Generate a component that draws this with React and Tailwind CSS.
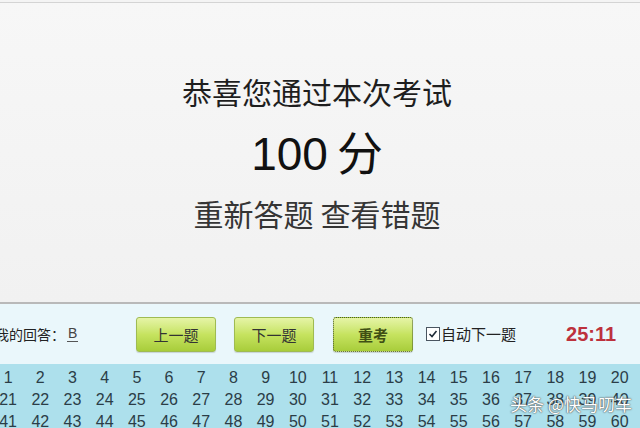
const arial = "font-['Liberation_Sans',Arial,'Noto_Sans_CJK_SC',sans-serif]"

function GreenButton({ children, focused }) {
  return (
    <button
      className={`w-[80px] h-[35px] rounded-[3px] bg-gradient-to-b from-[#e6f4a6] via-[#c6e35f] to-[#a8cd3a] text-[15px] leading-none shadow-[0_1px_1px_rgba(0,0,0,0.15)] ${
        focused
          ? 'border border-dotted border-[#4b5a2a] text-[#3f4f14] font-bold'
          : 'border border-[#9fbb52] text-[#333]'
      }`}
    >
      {children}
    </button>
  )
}

const rows = [
  Array.from({ length: 20 }, (_, i) => i + 1),
  Array.from({ length: 20 }, (_, i) => i + 21),
  Array.from({ length: 20 }, (_, i) => i + 41),
]

export default function App() {
  return (
    <div className="relative w-[640px] h-[428px] overflow-hidden bg-[#f4f4f4] font-['Noto_Sans_CJK_SC','Noto_Sans',sans-serif]">
      {/* result panel */}
      <div className="h-[300px] mt-[2px] border-t border-[#d4d4d4] bg-gradient-to-b from-[#f7f7f7] to-[#f1f1f1] flex flex-col items-center">
        <h1 className="mt-[73px] ml-[-6px] text-[30px] leading-none text-[#1e1e1e] font-normal">
          恭喜您通过本次考试
        </h1>
        <div className="mt-[21px] ml-[-6px] flex items-baseline text-[46px] leading-none text-[#111]">
          <span className={arial}>100</span>
          <span className="ml-[9px]">分</span>
        </div>
        <div className="mt-[21px] ml-[-6px] flex gap-[7px] text-[30px] leading-none text-[#353535]">
          <span>重新答题</span>
          <span>查看错题</span>
        </div>
      </div>

      {/* toolbar */}
      <div className="h-[62px] border-t-2 border-[#b9b9b9] bg-[#eaf7fb] flex items-center">
        <div className="ml-[-5px] w-[141px] flex items-center text-[14px] text-[#222]">
          <span>我的回答：</span>
          <span className={`ml-[2px] px-[1px] border-b border-[#555] leading-[15px] text-[#444] ${arial}`}>B</span>
        </div>
        <div className="flex items-center gap-[18px]">
          <GreenButton>上一题</GreenButton>
          <GreenButton>下一题</GreenButton>
        </div>
        <div className="ml-[19px]">
          <GreenButton focused>重考</GreenButton>
        </div>
        <label className="ml-[13px] flex items-center text-[15px] text-[#222]">
          <span className="w-[14px] h-[14px] border border-[#4a5560] bg-white flex items-center justify-center">
            <svg width="10" height="10" viewBox="0 0 10 10">
              <path d="M1.5 5 L4 7.5 L8.5 2" fill="none" stroke="#1d2a36" strokeWidth="1.6" />
            </svg>
          </span>
          <span className="ml-[1px]">自动下一题</span>
        </label>
        <span className={`ml-[50px] text-[20px] font-bold text-[#bd313c] ${arial}`}>25:11</span>
      </div>

      {/* question number grid */}
      <div className="bg-[#ade0ec] pt-[3px] h-[80px]">
        {rows.map((row, r) => (
          <div key={r} className="ml-[-8px] grid grid-cols-[repeat(20,32.2px)] h-[22px] items-center">
            {row.map((n) => (
              <span key={n} className={`text-center text-[16px] leading-none text-[#2b3d47] ${arial}`}>
                {n}
              </span>
            ))}
          </div>
        ))}
      </div>

      {/* watermark */}
      <div className="absolute left-[510px] top-[395px] text-[17px] leading-none text-white [text-shadow:0_0_2px_#555,0_0_1px_#333]">
        头条 @快马叨车
      </div>
    </div>
  )
}
